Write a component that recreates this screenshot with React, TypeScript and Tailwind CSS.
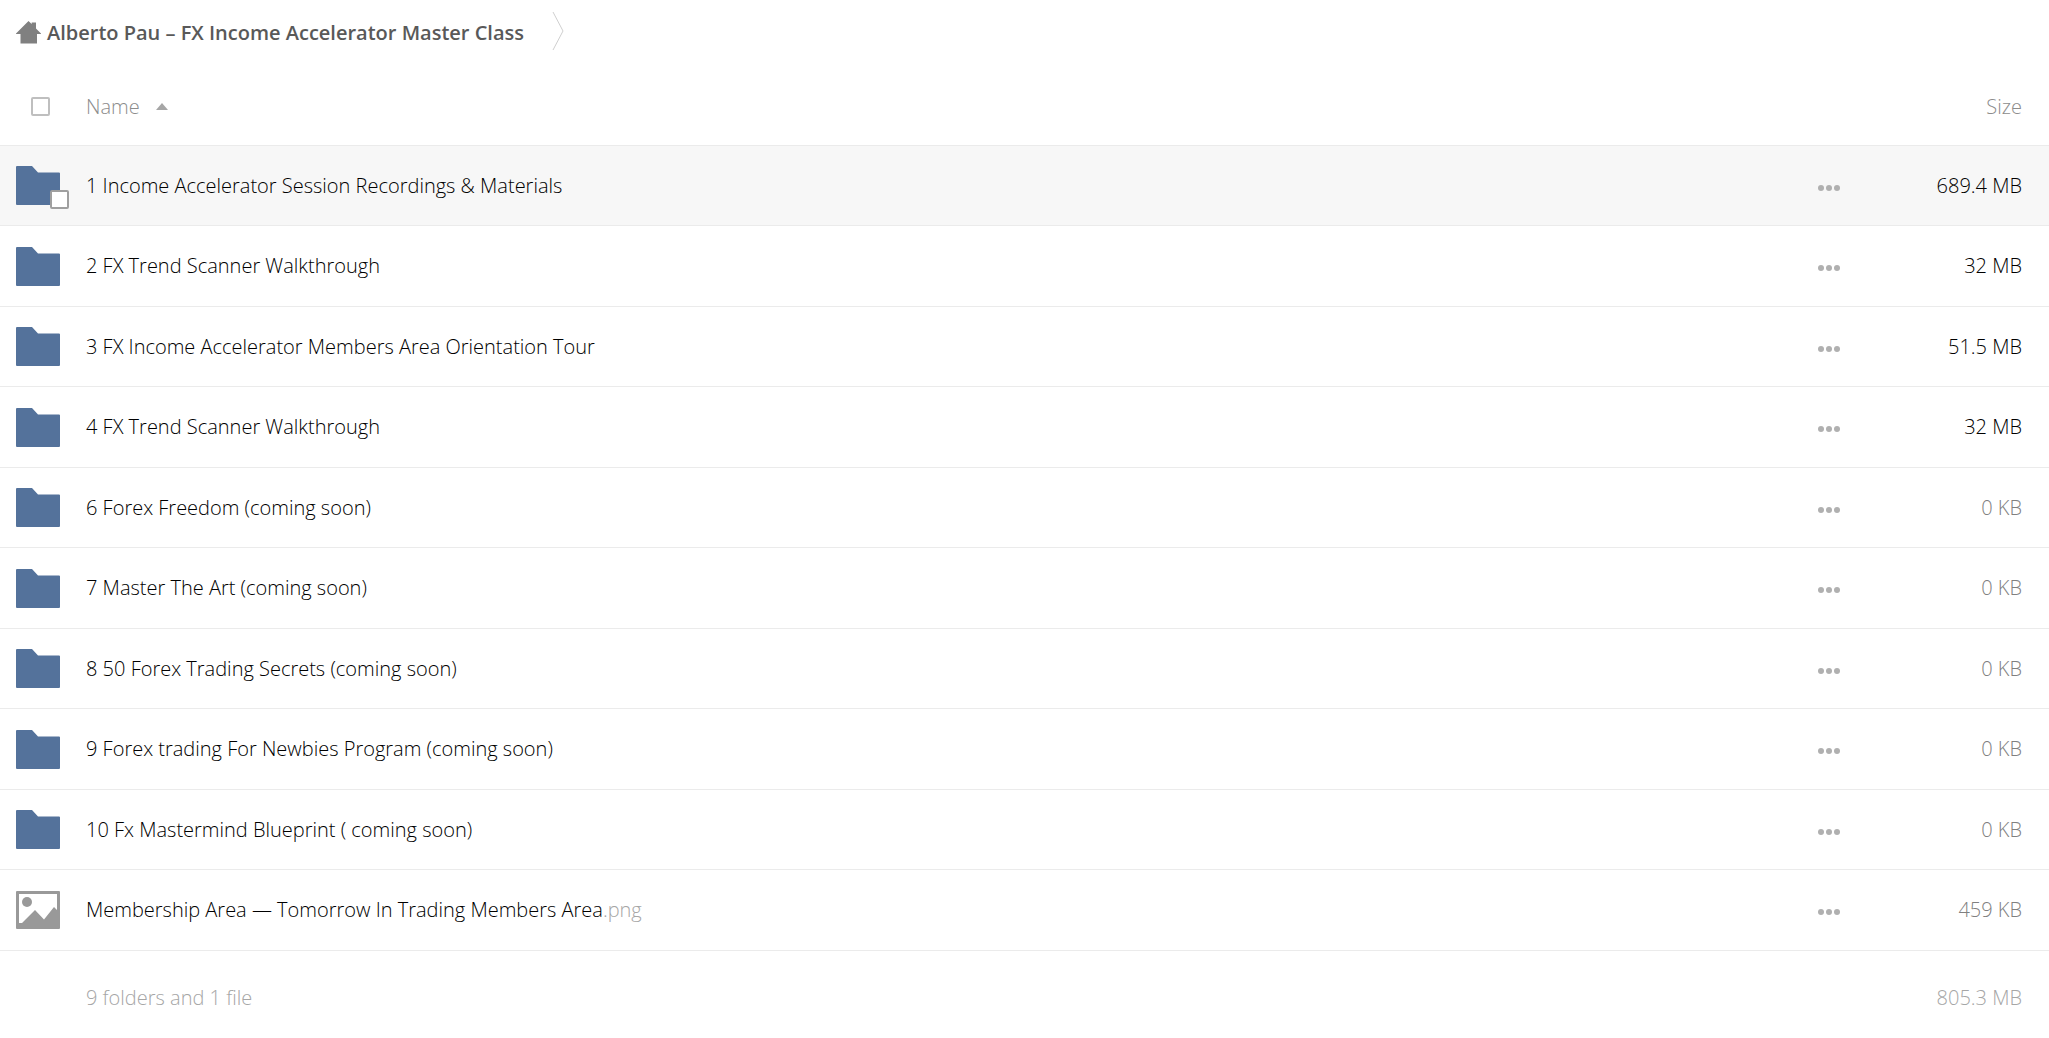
import React from 'react';

interface Entry {
  name: string;
  ext?: string;
  size: string;
  type: 'folder' | 'image';
  muted?: boolean;
  active?: boolean;
}

const entries: Entry[] = [
  { name: '1 Income Accelerator Session Recordings & Materials', size: '689.4 MB', type: 'folder', active: true },
  { name: '2 FX Trend Scanner Walkthrough', size: '32 MB', type: 'folder' },
  { name: '3 FX Income Accelerator Members Area Orientation Tour', size: '51.5 MB', type: 'folder' },
  { name: '4 FX Trend Scanner Walkthrough', size: '32 MB', type: 'folder' },
  { name: '6 Forex Freedom (coming soon)', size: '0 KB', type: 'folder', muted: true },
  { name: '7 Master The Art (coming soon)', size: '0 KB', type: 'folder', muted: true },
  { name: '8 50 Forex Trading Secrets (coming soon)', size: '0 KB', type: 'folder', muted: true },
  { name: '9 Forex trading For Newbies Program (coming soon)', size: '0 KB', type: 'folder', muted: true },
  { name: '10 Fx Mastermind Blueprint ( coming soon)', size: '0 KB', type: 'folder', muted: true },
  { name: 'Membership Area — Tomorrow In Trading Members Area', ext: '.png', size: '459 KB', type: 'image', muted: true },
];

function HomeIcon() {
  return (
    <svg width="25" height="23" viewBox="0 0 25 23" fill="#808080" aria-hidden="true">
      <path d="M12.5 0L15.700 3V1.5H20V7.5L25 12.5V13H21V22.5H4.500V13H0V12.500Z" />
    </svg>
  );
}

function FolderIcon() {
  return (
    <svg width="44" height="39" viewBox="0 0 44 39" fill="#54729b" aria-hidden="true">
      <path d="M1 0H16L22 6.500H43Q44 6.500 44 7.500V38Q44 39 43 39H1Q0 39 0 38V1Q0 0 1 0Z" />
    </svg>
  );
}

function ImageIcon() {
  return (
    <svg width="44" height="38" viewBox="0 0 44 38" fill="#999999" aria-hidden="true">
      <path fillRule="evenodd" d="M1 0H43Q44 0 44 1V37Q44 38 43 38H1Q0 38 0 37V1Q0 0 1 0ZM3 3V32H6L19 19L28 28.500L38 16L41 19V3Z" />
      <circle cx="11" cy="11" r="5" />
    </svg>
  );
}

function DotsIcon() {
  return (
    <svg width="22" height="6" viewBox="0 0 22 6" fill="#b0b0b0" aria-hidden="true">
      <circle cx="3" cy="3" r="3" />
      <circle cx="11" cy="3" r="3" />
      <circle cx="19" cy="3" r="3" />
    </svg>
  );
}

function FileRow({ entry }: { entry: Entry }) {
  return (
    <tr className={`h-20 even:h-[81px] *:border-b *:border-[#ebebeb] ${entry.active ? 'bg-[#f7f7f7]' : ''}`}>
      <td className="pl-4">
        <div className="relative w-11">
          {entry.type === 'folder' ? <FolderIcon /> : <ImageIcon />}
          {entry.active && (
            <input
              type="checkbox"
              aria-label={`Select ${entry.name}`}
              className="absolute -right-[9px] -bottom-1 size-[19px] appearance-none rounded-xs border-2 border-[#9f9f9f] bg-white"
            />
          )}
        </div>
      </td>
      <td>
        <a href="#" className="text-black">
          {entry.name}
          {entry.ext && <span className="text-[#a6a6a6]">{entry.ext}</span>}
        </a>
      </td>
      <td>
        <button type="button" aria-label="More actions" className="flex h-10 items-center pt-1">
          <DotsIcon />
        </button>
      </td>
      <td className={`pr-[27px] text-right ${entry.muted ? 'text-[#808080]' : 'text-black'}`}>{entry.size}</td>
    </tr>
  );
}

export default function App() {
  return (
    <div className="min-h-screen bg-white font-['Open_Sans',sans-serif] text-xl font-light">
      {/* Breadcrumb */}
      <nav className="flex h-16 items-center pl-4">
        <a href="#" className="flex items-center gap-1.5 font-semibold text-[#595959]">
          <HomeIcon />
          <span className="pt-0.5">Alberto Pau – FX Income Accelerator Master Class</span>
        </a>
        <svg width="12" height="38" viewBox="0 0 12 38" fill="none" stroke="#cfcfcf" className="mb-0.5 ml-7" aria-hidden="true">
          <path d="M1 0L11 19L1 38" />
        </svg>
      </nav>

      <table className="w-full border-separate border-spacing-0">
        <thead>
          <tr className="h-[82px] text-[#8c8c8c] *:border-b *:border-[#ebebeb] *:pt-1">
            <th className="w-[86px] pl-[31px]">
              <input
                type="checkbox"
                aria-label="Select all"
                className="block size-[19px] appearance-none rounded-xs border-2 border-[#bfbfbf]"
              />
            </th>
            <th className="text-left font-light">
              <button type="button" className="flex items-center gap-4">
                Name
                <svg width="12" height="7" viewBox="0 0 12 7" fill="#a6a6a6" aria-hidden="true">
                  <path d="M6 0L12 7H0Z" />
                </svg>
              </button>
            </th>
            <th className="w-[87px]" />
            <th className="w-36 pr-[27px] text-right font-light">Size</th>
          </tr>
        </thead>
        <tbody>
          {entries.map((entry) => (
            <FileRow key={entry.name} entry={entry} />
          ))}
        </tbody>
        <tfoot>
          <tr className="h-[87px] text-[#a6a6a6]">
            <td />
            <td className="pt-1.5">9 folders and 1 file</td>
            <td />
            <td className="pt-1.5 pr-[27px] text-right">805.3 MB</td>
          </tr>
        </tfoot>
      </table>
    </div>
  );
}
